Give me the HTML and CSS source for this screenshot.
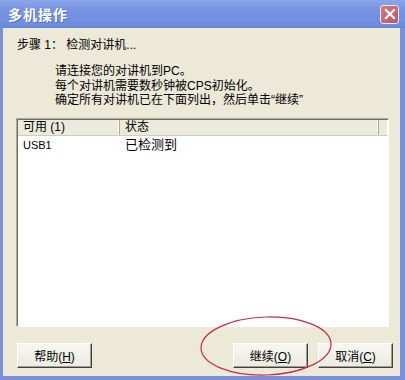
FILE: index.html
```html
<!DOCTYPE html>
<html lang="zh-CN">
<head>
    <meta charset="UTF-8">
    <title>多机操作</title>
    <link rel="stylesheet" href="styles.css">
</head>
<body>
    <div class="window">
        <div class="titlebar">
            <span class="title">多机操作</span>
            <button class="close-btn" aria-label="关闭">
                <svg width="12" height="12" viewBox="0 0 12 12">
                    <path d="M2 2 L10 10 M10 2 L2 10" stroke="#fff" stroke-width="2.2" stroke-linecap="square"/>
                </svg>
            </button>
        </div>

        <div class="content">
            <p class="step">步骤 1：&nbsp;检测对讲机...</p>

            <div class="instructions">
                <p>请连接您的对讲机到PC。</p>
                <p>每个对讲机需要数秒钟被CPS初始化。</p>
                <p>确定所有对讲机已在下面列出，然后单击“继续”</p>
            </div>

            <!-- Device list -->
            <div class="list">
                <div class="list-header">
                    <div class="col col-name">可用 (1)</div>
                    <div class="col col-state">状态</div>
                    <div class="col col-rest"></div>
                </div>
                <div class="list-row">
                    <div class="col-name">USB1</div>
                    <div class="col-state">已检测到</div>
                </div>
            </div>

            <div class="buttons">
                <button class="btn">帮助(<u>H</u>)</button>
                <span class="spacer"></span>
                <button class="btn">继续(<u>O</u>)</button>
                <button class="btn">取消(<u>C</u>)</button>
            </div>
        </div>

        <!-- hand-drawn highlight around the continue button -->
        <svg class="mark" width="140" height="66" viewBox="0 0 140 66">
            <ellipse cx="67" cy="31" rx="65" ry="29" fill="none" stroke="#cc2a44" stroke-width="1.2" transform="rotate(-2 67 31)"/>
        </svg>
    </div>
</body>
</html>
```

FILE: styles.css
```css
* {
    margin: 0;
    padding: 0;
    box-sizing: border-box;
}

body {
    font-family: "Liberation Sans", "Noto Sans CJK SC", sans-serif;
    font-size: 12px;
    color: #000;
    background: #ece9d8;
}

.window {
    position: relative;
    width: 405px;
    height: 380px;
    display: flex;
    flex-direction: column;
}

.titlebar {
    height: 28px;
    display: flex;
    align-items: center;
    justify-content: space-between;
    padding: 0 6px 0 8px;
    background: linear-gradient(#8aa5ea, #7693e2 35%, #7290e0 70%, #6a88da);
}

.title {
    color: #fff;
    font-weight: bold;
    font-size: 14px;
    letter-spacing: 1px;
    text-shadow: 1px 1px 0 #5670b8;
}

.close-btn {
    width: 19px;
    height: 19px;
    border: 1px solid #e8e8f0;
    border-radius: 3px;
    background: linear-gradient(135deg, #d47a80, #bb5660);
    display: flex;
    align-items: center;
    justify-content: center;
}

.content {
    flex: 1;
    border-left: 3px solid #7b8fd9;
    border-right: 5px solid #7b8fd9;
    border-bottom: 4px solid #7b8fd9;
    padding: 8px 7px 0 13px;
    display: flex;
    flex-direction: column;
}

.step {
    line-height: 18px;
    padding-left: 1px;
}

.instructions {
    margin: 10px 0 0 39px;
    line-height: 14.5px;
}

/* list view */
.list {
    margin-top: 10px;
    width: 373px;
    height: 209px;
    background: #fff;
    border-top: 1px solid #aca899;
    border-left: 1px solid #aca899;
    border-right: 1px solid #fff;
    border-bottom: 1px solid #fff;
    box-shadow: inset 1px 1px 0 #716f64;
}

.list-header {
    display: flex;
    height: 16px;
    margin: 1px 0 0 1px;
    background: #ebeadb;
    border-bottom: 1px solid #d0cdbf;
}

.list-header .col {
    line-height: 15px;
    padding-left: 5px;
    border-right: 1px solid #aca899;
    box-shadow: inset -1px 0 0 #fff;
}

.col-name {
    width: 102px;
}

.col-state {
    width: 259px;
}

.list-header .col-rest {
    flex: 1;
    border-right: none;
}

.list-row {
    display: flex;
    line-height: 16px;
    margin-left: 1px;
    padding-top: 1px;
}

.list-row .col-name,
.list-row .col-state {
    padding-left: 5px;
}

.list-row .col-name {
    font-size: 11px;
}

.list-row .col-state {
    font-size: 13px;
}

.buttons {
    display: flex;
    gap: 10px;
    margin-top: 16px;
    padding-left: 1px;
}

.spacer {
    flex: 1;
}

.btn {
    width: 75px;
    height: 25px;
    font: inherit;
    background: linear-gradient(#f7f6f0, #ecebe2);
    border: 1px solid;
    border-color: #fff #404040 #404040 #fff;
    box-shadow: inset -1px -1px 0 #a09d90;
}

.btn u {
    text-underline-offset: 1px;
}

.mark {
    position: absolute;
    left: 199px;
    top: 315px;
}
```
